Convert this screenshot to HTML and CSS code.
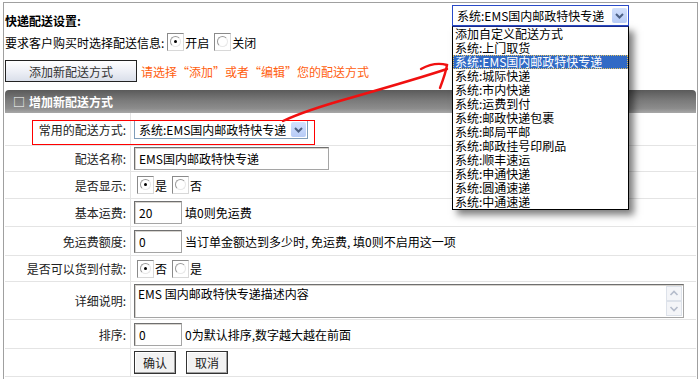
FILE: index.html
```html
<!DOCTYPE html>
<html lang="zh-CN">
<head>
  <meta charset="UTF-8">
  <title>快递配送设置</title>
  <link rel="stylesheet" href="styles.css">
</head>
<body>
  <div class="page">
    <div class="frame">
      <div class="title">快递配送设置:</div>
      <div class="line">
        要求客户购买时选择配送信息:
        <span class="radio on"></span><span class="opt">开启</span>
        <span class="radio"></span><span class="opt">关闭</span>
      </div>
      <div class="line add-line">
        <button class="btn-add">添加新配送方式</button>
        <span class="tip">请选择“添加”或者“编辑”您的配送方式</span>
      </div>

      <div class="bar"><span class="bar-box">□</span>增加新配送方式</div>

      <div class="form">
        <div class="row h33">
          <div class="lab">常用的配送方式:</div>
          <div class="val">
            <div class="select">
              <span>系统:EMS国内邮政特快专递</span>
              <span class="sel-btn"><svg width="15" height="15" viewBox="0 0 15 15"><polyline points="4,6 7.5,9.5 11,6" fill="none" stroke="#4d6185" stroke-width="2"/></svg></span>
            </div>
          </div>
        </div>
        <div class="row h26">
          <div class="lab">配送名称:</div>
          <div class="val"><input class="txt txt-name" type="text" value="EMS国内邮政特快专递"></div>
        </div>
        <div class="row h27">
          <div class="lab">是否显示:</div>
          <div class="val">
            <span class="radio on"></span><span class="opt">是</span>
            <span class="radio"></span><span class="opt">否</span>
          </div>
        </div>
        <div class="row h28">
          <div class="lab">基本运费:</div>
          <div class="val"><input class="txt txt-num" type="text" value="20"><span class="hint">填0则免运费</span></div>
        </div>
        <div class="row h29">
          <div class="lab">免运费额度:</div>
          <div class="val"><input class="txt txt-num" type="text" value="0"><span class="hint">当订单金额达到多少时, 免运费, 填0则不启用这一项</span></div>
        </div>
        <div class="row h26">
          <div class="lab">是否可以货到付款:</div>
          <div class="val">
            <span class="radio on"></span><span class="opt">否</span>
            <span class="radio"></span><span class="opt">是</span>
          </div>
        </div>
        <div class="row h38">
          <div class="lab">详细说明:</div>
          <div class="val">
            <div class="area">
              <span class="area-text">EMS 国内邮政特快专递描述内容</span>
              <span class="scroll">
                <span class="scroll-btn"><svg width="14" height="13" viewBox="0 0 14 13"><polyline points="3.5,8 7,4.5 10.5,8" fill="none" stroke="#b5bccb" stroke-width="1.6"/></svg></span>
                <span class="scroll-btn"><svg width="14" height="13" viewBox="0 0 14 13"><polyline points="3.5,5 7,8.5 10.5,5" fill="none" stroke="#b5bccb" stroke-width="1.6"/></svg></span>
              </span>
            </div>
          </div>
        </div>
        <div class="row h29">
          <div class="lab">排序:</div>
          <div class="val"><input class="txt txt-num" type="text" value="0"><span class="hint">0为默认排序,数字越大越在前面</span></div>
        </div>
        <div class="row h28">
          <div class="lab"></div>
          <div class="val">
            <button class="btn">确认</button>
            <button class="btn">取消</button>
          </div>
        </div>
      </div>
    </div>

    <!-- 标注：红框 + 手绘箭头 -->
    <div class="mark"></div>
    <svg class="arrow" width="700" height="379" viewBox="0 0 700 379">
      <path d="M283,121 C300,113 325,105 350,98 C385,88 420,78 447,69" fill="none" stroke="#f01010" stroke-width="2.4" stroke-linecap="round"/>
      <path d="M421,69 C430,64 440,63 447,65 C446,72 443,80 440,88" fill="none" stroke="#f01010" stroke-width="2.4" stroke-linecap="round"/>
    </svg>

    <!-- 展开的下拉框 -->
    <div class="dropdown">
      <div class="dd-head">
        <span>系统:EMS国内邮政特快专递</span>
        <span class="sel-btn"><svg width="15" height="15" viewBox="0 0 15 15"><polyline points="4,6 7.5,9.5 11,6" fill="none" stroke="#4d6185" stroke-width="2"/></svg></span>
      </div>
      <ul class="dd-list">
        <li>添加自定义配送方式</li>
        <li>系统:上门取货</li>
        <li class="active">系统:EMS国内邮政特快专递</li>
        <li>系统:城际快递</li>
        <li>系统:市内快递</li>
        <li>系统:运费到付</li>
        <li>系统:邮政快递包裹</li>
        <li>系统:邮局平邮</li>
        <li>系统:邮政挂号印刷品</li>
        <li>系统:顺丰速运</li>
        <li>系统:申通快递</li>
        <li>系统:圆通速递</li>
        <li>系统:中通速递</li>
      </ul>
    </div>
  </div>
</body>
</html>
```

FILE: styles.css
```css
body {
  margin: 0;
  font: 12px "Noto Sans CJK SC", "Liberation Sans", sans-serif;
  color: #000;
  background: #fff;
}
.page {
  position: relative;
  width: 700px;
  height: 379px;
  overflow: hidden;
}
.frame {
  margin: 2px 2px 0 3px;
  padding: 0 1px;
  height: 377px;
  box-sizing: border-box;
  border: 1px solid #a0a0a0;
  border-bottom: none;
}
.title {
  margin-top: 8px;
  height: 20px;
  line-height: 20px;
  font-weight: bold;
}
.line {
  display: flex;
  align-items: center;
  height: 22px;
}
.add-line {
  margin-top: 7px;
}
.radio {
  position: relative;
  display: inline-block;
  width: 15px;
  height: 16px;
  margin-left: 3px;
  border: 1px solid #8a8a8a;
  border-right-color: #d8d8d8;
  border-bottom-color: #d8d8d8;
  background: #fff;
}
.radio::before {
  content: "";
  position: absolute;
  left: 2px;
  top: 2px;
  width: 9px;
  height: 9px;
  border: 1px solid #9a9a9a;
  border-right-color: #e8e8e8;
  border-bottom-color: #e8e8e8;
  border-radius: 50%;
}
.radio.on::after {
  content: "";
  position: absolute;
  left: 6px;
  top: 6px;
  width: 3px;
  height: 3px;
  background: #000;
  border-radius: 50%;
}
.opt {
  margin-left: 1px;
  margin-right: 2px;
}
.btn-add {
  width: 132px;
  height: 22px;
  padding: 0;
  border: 1px solid #222;
  background: linear-gradient(#ffffff, #eef0f6 50%, #dadfea);
  font: 12px "Noto Sans CJK SC", "Liberation Sans", sans-serif;
  color: #333;
}
.tip {
  margin-left: 4px;
  color: #ff6010;
}
.bar {
  margin-top: 8px;
  height: 23px;
  line-height: 23px;
  padding-left: 8px;
  border-radius: 4px 4px 0 0;
  background: linear-gradient(#5a5a5a, #7a7a7a 45%, #8c8c8c 80%, #a8a8a8);
  color: #fff;
  font-weight: bold;
}
.bar-box {
  margin-right: 4px;
  font-weight: normal;
}
.row {
  display: grid;
  grid-template-columns: 126px 1fr;
  box-sizing: border-box;
  border-bottom: 1px solid #e4e4e4;
}
.h26 { height: 26px; }
.h27 { height: 27px; }
.h28 { height: 28px; }
.h29 { height: 29px; }
.h33 { height: 33px; }
.h38 { height: 38px; }
.lab {
  display: flex;
  align-items: center;
  justify-content: flex-end;
  padding-right: 4px;
  border-right: 1px solid #e4e4e4;
  color: #222;
}
.val {
  display: flex;
  align-items: center;
  padding-left: 3px;
}
.select {
  display: flex;
  align-items: center;
  justify-content: space-between;
  width: 174px;
  height: 19px;
  box-sizing: border-box;
  padding: 0 1px 0 4px;
  border: 1px solid #7f9db9;
  background: #fff;
}
.sel-btn {
  display: block;
  width: 15px;
  height: 15px;
  border-radius: 2px;
  background: linear-gradient(#d2e0fd, #b7cbf6);
}
.sel-btn svg {
  display: block;
}
.txt {
  box-sizing: border-box;
  height: 23px;
  padding: 0 4px;
  border: 1px solid #a5a5a5;
  border-top-color: #6f6f6f;
  border-left-color: #6f6f6f;
  box-shadow: inset 1px 1px 0 #d6d3ce;
  font: 12px "Noto Sans CJK SC", "Liberation Sans", sans-serif;
  color: #000;
}
.txt-name {
  width: 195px;
}
.txt-num {
  width: 48px;
}
.hint {
  margin-left: 3px;
}
.area {
  display: flex;
  justify-content: space-between;
  width: 550px;
  height: 34px;
  box-sizing: border-box;
  border: 1px solid #a5a5a5;
  border-top-color: #6f6f6f;
  border-left-color: #6f6f6f;
  box-shadow: inset 1px 1px 0 #d6d3ce;
}
.area-text {
  padding: 2px 3px;
  line-height: 14px;
}
.scroll {
  display: flex;
  flex-direction: column;
  justify-content: space-between;
  padding: 1px;
}
.scroll-btn {
  display: block;
  width: 14px;
  height: 13px;
  border: 1px solid #dde2ea;
  background: #f4f5f8;
}
.scroll-btn svg {
  display: block;
}
.btn {
  width: 42px;
  height: 23px;
  margin-right: 10px;
  padding: 0;
  border: 1px solid #333;
  box-shadow: inset -1px -1px 0 #a0a0a0, inset 1px 1px 0 #fff;
  background: #f2f2f2;
  font: 12px "Noto Sans CJK SC", "Liberation Sans", sans-serif;
  color: #222;
}
.mark {
  position: absolute;
  left: 32px;
  top: 120px;
  width: 281px;
  height: 23px;
  border: 1px solid #f00;
}
.arrow {
  position: absolute;
  left: 0;
  top: 0;
  pointer-events: none;
}
.dropdown {
  position: absolute;
  left: 452px;
  top: 5px;
  width: 177px;
}
.dd-head {
  display: flex;
  align-items: center;
  justify-content: space-between;
  height: 21px;
  box-sizing: border-box;
  padding: 0 1px 0 4px;
  border: 1px solid #2a4bc8;
  background: #fff;
}
.dd-list {
  margin: 0;
  padding: 0;
  list-style: none;
  border: 1px solid #000;
  border-top-color: #1a2a8a;
  background: #fff;
  box-shadow: 5px 5px 7px rgba(0, 0, 0, 0.5);
}
.dd-list li {
  height: 14px;
  line-height: 14px;
  padding-left: 2px;
  white-space: nowrap;
}
.dd-list li.active {
  background: #316ac5;
  color: #fff;
  outline: 1px dotted #e0c060;
  outline-offset: -1px;
}
```
